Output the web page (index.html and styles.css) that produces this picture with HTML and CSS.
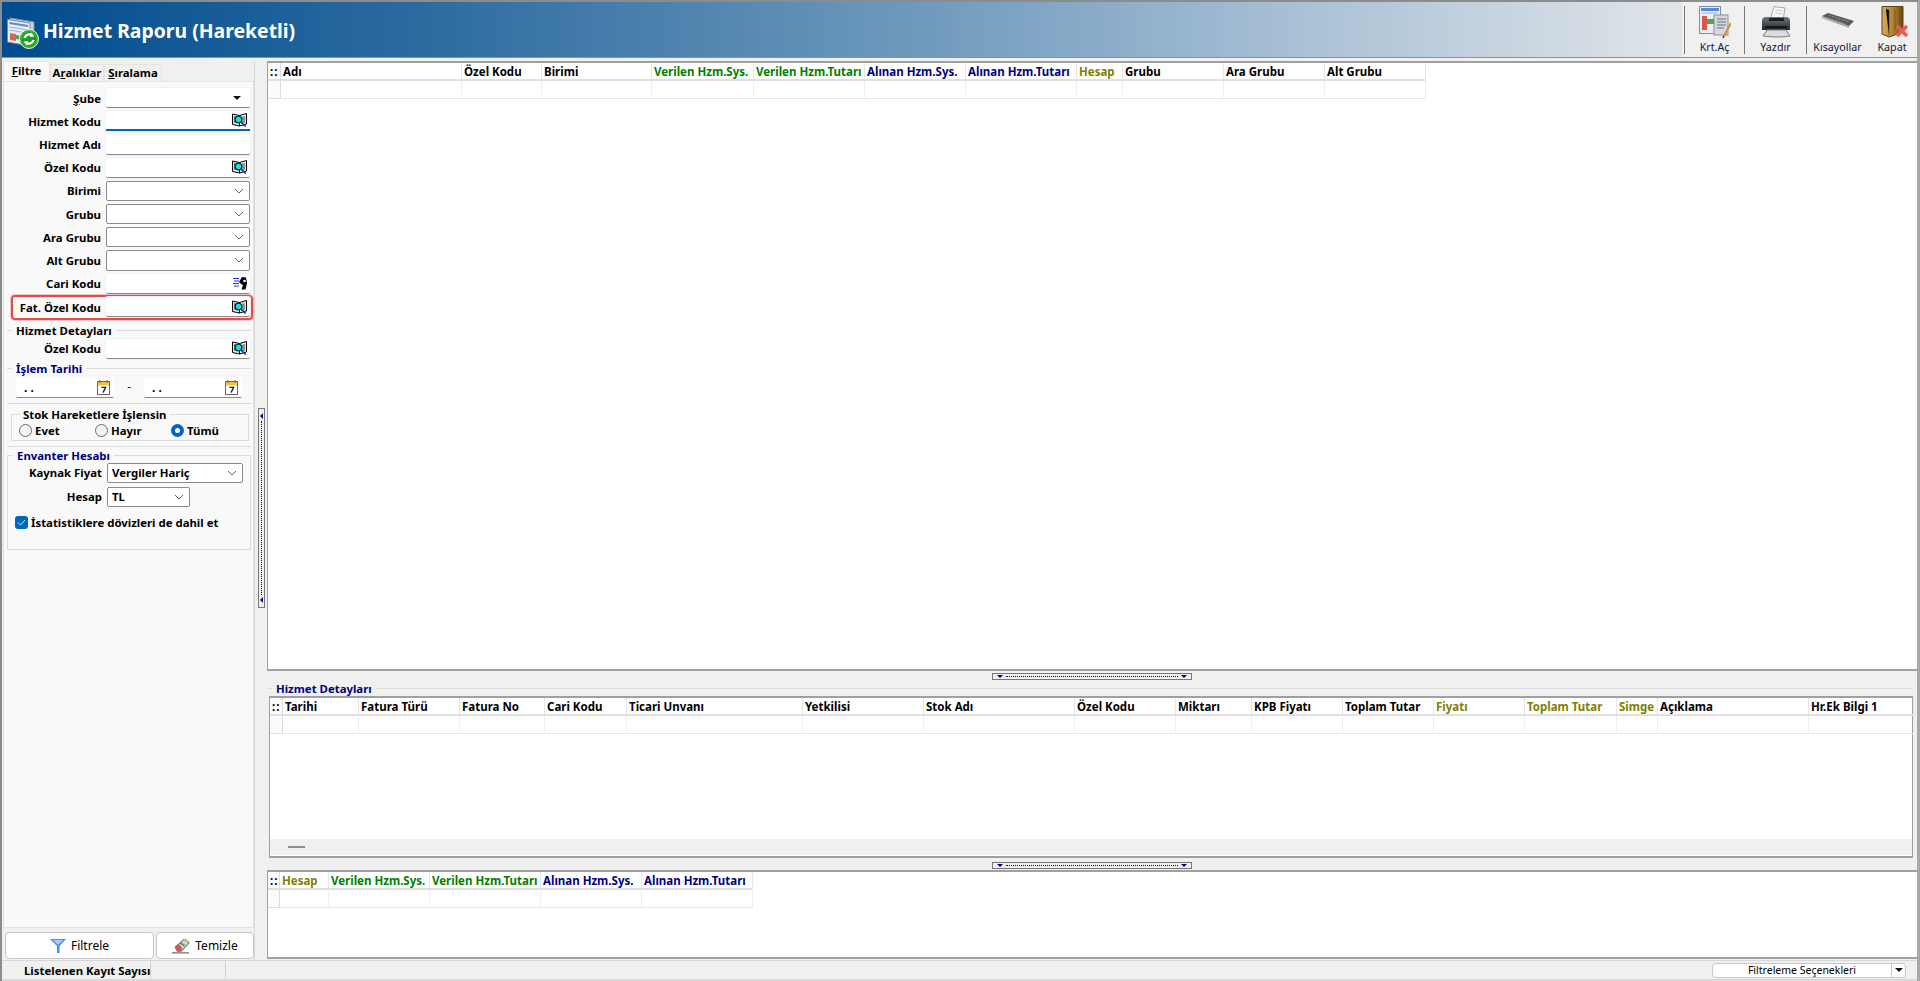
FILE: index.html
```html
<!DOCTYPE html>
<html lang="tr">
  <head>
    <meta charset="UTF-8" />
    <meta name="viewport" content="width=device-width, initial-scale=1.0" />
    <title>Hizmet Raporu (Hareketli)</title>
    <link rel="stylesheet" href="styles.css">
  </head>
  <body>
    <svg class="icon-defs" width="0" height="0">
      <defs>
        <linearGradient id="door-fill" x1="0" y1="0" x2="1" y2="0">
          <stop offset="0" stop-color="#d8b060" />
          <stop offset="0.6" stop-color="#a87a2c" />
          <stop offset="1" stop-color="#6e4c18" />
        </linearGradient>
        <linearGradient id="printer-fill" x1="0" y1="0" x2="0" y2="1">
          <stop offset="0" stop-color="#70767c" />
          <stop offset="1" stop-color="#24282c" />
        </linearGradient>
      </defs>
      <symbol id="book" viewBox="0 0 15 14">
        <path d="M0.5 1 L7.5 2.5 L14.5 0.5 V11 L7.5 13 L0.5 11.5 Z" fill="#e4e4e4" stroke="#000" />
        <path d="M7.5 2.5 V13" stroke="#000" />
        <path d="M2 3 L6 4 V10.5 L2 9.5 Z" fill="#5c6a5c" />
        <path d="M9 4 L13 3 V9.5 L9 10.5 Z" fill="#8c948c" />
        <circle cx="6.5" cy="6.5" r="3.4" fill="#12e0e8" stroke="#000" />
        <path d="M9 9 L13.8 13.5" stroke="#1030c0" stroke-width="1.7" />
      </symbol>
      <symbol id="calendar" viewBox="0 0 13 15">
        <rect x="0.5" y="1.5" width="12" height="13" fill="#fff" stroke="#666" />
        <rect x="1" y="2" width="11" height="3.5" fill="#f2c63c" />
        <path d="M3 0 V3 M10 0 V3" stroke="#a07820" stroke-width="1.4" />
        <path d="M4.4 7.4 H8.6 L6 12.6" fill="none" stroke="#222" stroke-width="1.3" />
      </symbol>
      <symbol id="chevron" viewBox="0 0 10 6">
        <path d="M1 1 L5 5 L9 1" fill="none" stroke="#666" />
      </symbol>
    </svg>

    <div class="window">
      <header class="titlebar">
        <svg class="title-icon" viewBox="0 0 32 32">
          <path d="M3 1 L27 5 V27 L3 23 Z" fill="#c8d0dc" stroke="#8090a4" />
          <path d="M0.5 2.5 L23 6 V29 L0.5 25 Z" fill="#e8edf6" stroke="#7a8aa0" />
          <path d="M2.5 6 L21 9" stroke="#5d88d8" stroke-width="2" />
          <path d="M2.5 10 L21 13 M2.5 13 L14 15" stroke="#9ab0d8" />
          <path d="M3 16 L9 17 V24 L3 23 Z" fill="#d06a58" />
          <path d="M9 18 L20 20 V24 L9 22 Z" fill="#4fa64f" />
          <circle cx="22" cy="22" r="9.5" fill="#2fb02f" stroke="#e8f4e8" />
          <circle cx="22" cy="22" r="7" fill="#1f9a2a" />
          <path d="M17.5 21 A5 5 0 0 1 25.5 18.5 M26.5 23 A5 5 0 0 1 18.5 25.5" fill="none" stroke="#fff" stroke-width="2.4" />
          <path d="M24 15.5 L27.5 19.5 L23 20 Z M20 28.5 L16.5 24.5 L21 24 Z" fill="#fff" />
        </svg>
        <h1 class="title-text">Hizmet Raporu (Hareketli)</h1>
        <nav class="toolbar">
          <button class="tool tool-sep tool-krt">
            <svg viewBox="0 0 32 32">
              <rect x="0.5" y="0.5" width="21" height="27" fill="#e9eef8" stroke="#7e8fa8" />
              <rect x="2" y="2" width="18" height="3" fill="#5d88d8" />
              <path d="M3 7 H19" stroke="#9ab0d8" />
              <rect x="3" y="10" width="5" height="14" fill="#d9574a" />
              <rect x="8" y="13" width="10" height="5" fill="#4da65a" />
              <rect x="15" y="9" width="14" height="20" fill="#d5d8dc" stroke="#8a8f96" />
              <path d="M18 13 H27 M18 16 H27 M18 19 H27 M18 22 H25" stroke="#8f9399" stroke-width="1.4" />
              <path d="M32 17 L25 30" stroke="#c89a30" stroke-width="2.2" />
              <path d="M25 30 L24 32" stroke="#333" stroke-width="1.5" />
            </svg>
            <span>Krt.Aç</span>
          </button>
          <button class="tool tool-sep tool-print">
            <svg viewBox="0 0 32 32">
              <path d="M14 0.5 L25 2 L23 14 H10 Z" fill="#f6f6f6" stroke="#a8a8a8" />
              <path d="M16 4 L23 5 M15.5 7 L22 8" stroke="#c8c8c8" />
              <path d="M2 15 Q2 11 6 11 H26 Q30 11 30 15 V24 H2 Z" fill="url(#printer-fill)" />
              <path d="M9 12 H24 V15 H9 Z" fill="#1c2024" />
              <path d="M7 24 H26 L30 30 Q20 32 3 30 Z" fill="#dcdcdc" stroke="#7c7c7c" />
              <rect x="5" y="20" width="22" height="2.4" fill="#14181c" />
            </svg>
            <span>Yazdır</span>
          </button>
          <button class="tool tool-sep tool-keys">
            <svg viewBox="0 0 32 32">
              <path d="M0 10 L6 7 L32 15 L27 20 Z" fill="#55585c" />
              <path d="M0 10 L27 20 L27 22 L0 12 Z" fill="#a4a7aa" />
              <path d="M7 9.5 L27 15.5 M6 12 L24 18" stroke="#8d8f92" stroke-dasharray="2 1" />
              <path d="M14 13 L18 14.4" stroke="#c05050" />
            </svg>
            <span>Kısayollar</span>
          </button>
          <button class="tool tool-close">
            <svg viewBox="0 0 32 32">
              <path d="M6 0.5 H27 V26 L13 31 L6 28 Z" fill="url(#door-fill)" stroke="#5e3f12" />
              <path d="M10 3 L13 4 V29 M19 3 V24 M24 3 V23" stroke="#5e3f12" stroke-opacity="0.55" />
              <path d="M21 20 L31 30 M31 20 L21 30" stroke="#f05858" stroke-width="3.6" />
            </svg>
            <span>Kapat</span>
          </button>
        </nav>
      </header>

      <div class="content">
        <aside class="sidebar">
          <div class="tabs">
            <div class="tab active"><u>F</u>iltre</div>
            <div class="tab tab-ranges">A<u>r</u>alıklar</div>
            <div class="tab tab-sort"><u>S</u>ıralama</div>
          </div>

          <div class="panel">
            <div class="form-rows">
              <div class="row">
                <label><u>Ş</u>ube</label>
                <div class="input"><span class="caret-black"></span></div>
              </div>
              <div class="row">
                <label>Hizmet Kodu</label>
                <div class="input focused"><svg class="ic-book"><use href="#book" /></svg></div>
              </div>
              <div class="row">
                <label>Hizmet Adı</label>
                <div class="input"></div>
              </div>
              <div class="row">
                <label>Özel Kodu</label>
                <div class="input"><svg class="ic-book"><use href="#book" /></svg></div>
              </div>
              <div class="row">
                <label>Birimi</label>
                <div class="input combo"><svg class="ic-chev"><use href="#chevron" /></svg></div>
              </div>
              <div class="row">
                <label>Grubu</label>
                <div class="input combo"><svg class="ic-chev"><use href="#chevron" /></svg></div>
              </div>
              <div class="row">
                <label>Ara Grubu</label>
                <div class="input combo"><svg class="ic-chev"><use href="#chevron" /></svg></div>
              </div>
              <div class="row">
                <label>Alt Grubu</label>
                <div class="input combo"><svg class="ic-chev"><use href="#chevron" /></svg></div>
              </div>
              <div class="row">
                <label>Cari Kodu</label>
                <div class="input">
                  <svg class="ic-runner" viewBox="0 0 14 14">
                    <path d="M0 2.5 H6 M1 5 H6 M0 7.5 H6 M1 10 H6" stroke="#2030e0" />
                    <path d="M6 6 L9 1 L13 1.5 L14 7 L12.5 13.5 H8.5 L10 9 L8 8 Z" fill="#000" />
                    <circle cx="11.5" cy="5" r="1.3" fill="#fff" />
                  </svg>
                </div>
              </div>
              <div class="row row-marked">
                <label>Fat. Özel Kodu</label>
                <div class="input"><svg class="ic-book"><use href="#book" /></svg></div>
              </div>
            </div>

            <fieldset class="group group-details">
              <legend>Hizmet Detayları</legend>
              <div class="row">
                <label>Özel Kodu</label>
                <div class="input"><svg class="ic-book"><use href="#book" /></svg></div>
              </div>
            </fieldset>

            <fieldset class="group group-date">
              <legend class="blue">İşlem Tarihi</legend>
              <div class="date-row">
                <div class="date-input"><span>. .</span><svg class="ic-cal"><use href="#calendar" /></svg></div>
                <span class="date-dash">-</span>
                <div class="date-input"><span>. .</span><svg class="ic-cal"><use href="#calendar" /></svg></div>
              </div>
              <div class="stock-wrap">
                <fieldset class="group-stock">
                  <legend>Stok Hareketlere İşlensin</legend>
                  <div class="radio-item"><span class="radio"></span>Evet</div>
                  <div class="radio-item"><span class="radio"></span>Hayır</div>
                  <div class="radio-item"><span class="radio checked"></span>Tümü</div>
                </fieldset>
              </div>
            </fieldset>

            <fieldset class="group group-stock-calc">
              <legend class="blue">Envanter Hesabı</legend>
              <div class="calc-row">
                <label>Kaynak Fiyat</label>
                <div class="input combo select-wide">Vergiler Hariç<svg class="ic-chev"><use href="#chevron" /></svg></div>
              </div>
              <div class="calc-row">
                <label>Hesap</label>
                <div class="input combo select-short">TL<svg class="ic-chev"><use href="#chevron" /></svg></div>
              </div>
              <div class="check-row">
                <span class="checkbox">
                  <svg viewBox="0 0 13 13"><path d="M3 6.5 L5.5 9 L10 4" fill="none" stroke="#cfe4f8" /></svg>
                </span>
                İstatistiklere dövizleri de dahil et
              </div>
            </fieldset>
          </div>

          <div class="side-buttons">
            <button class="btn btn-filter">
              <svg viewBox="0 0 16 14"><path d="M0 0 H16 L9.5 7 V14 H7 V7 Z" fill="#4d8ff0" /><path d="M3 1 H13 L8 6 Z" fill="#a6ccff" /></svg>
              Filtrele
            </button>
            <button class="btn btn-clear">
              <svg class="ic-eraser" viewBox="0 0 17 14">
                <path d="M3 8 L11 1 L16 4 L9 12 H5 Z" fill="#d8d8d8" stroke="#777" />
                <path d="M3 8 L6 5 L10 9 L8 12 H5 Z" fill="#d05858" />
                <path d="M11 1 L13 0 L16 2 L15 4 Z" fill="#e6c33a" />
                <path d="M8 4 L12 7" stroke="#58a058" stroke-width="2" />
                <path d="M0 13.5 H16" stroke="#555" />
              </svg>
              Temizle
            </button>
          </div>
        </aside>

        <div class="gutter">
          <div class="grip-v"><i></i><b></b><i></i></div>
        </div>

        <main class="main">
          <section class="grid-box grid-box-top">
            <div class="grid grid-main">
              <div class="hd ind">::</div>
              <div class="hd">Adı</div>
              <div class="hd">Özel Kodu</div>
              <div class="hd">Birimi</div>
              <div class="hd green">Verilen Hzm.Sys.</div>
              <div class="hd green">Verilen Hzm.Tutarı</div>
              <div class="hd navy">Alınan Hzm.Sys.</div>
              <div class="hd navy">Alınan Hzm.Tutarı</div>
              <div class="hd olive">Hesap</div>
              <div class="hd">Grubu</div>
              <div class="hd">Ara Grubu</div>
              <div class="hd">Alt Grubu</div>
              <div class="cl ind"></div><div class="cl"></div><div class="cl"></div><div class="cl"></div>
              <div class="cl"></div><div class="cl"></div><div class="cl"></div><div class="cl"></div>
              <div class="cl"></div><div class="cl"></div><div class="cl"></div><div class="cl"></div>
            </div>
          </section>

          <div class="split split-top"><div class="grip-h"><i></i><b></b><i></i></div></div>

          <div class="detail-title"><span>Hizmet Detayları</span></div>
          <section class="grid-box grid-box-detail">
            <div class="grid grid-detail">
              <div class="hd ind">::</div>
              <div class="hd">Tarihi</div>
              <div class="hd">Fatura Türü</div>
              <div class="hd">Fatura No</div>
              <div class="hd">Cari Kodu</div>
              <div class="hd">Ticari Unvanı</div>
              <div class="hd">Yetkilisi</div>
              <div class="hd">Stok Adı</div>
              <div class="hd">Özel Kodu</div>
              <div class="hd">Miktarı</div>
              <div class="hd">KPB Fiyatı</div>
              <div class="hd">Toplam Tutar</div>
              <div class="hd olive">Fiyatı</div>
              <div class="hd olive">Toplam Tutar</div>
              <div class="hd olive">Simge</div>
              <div class="hd">Açıklama</div>
              <div class="hd">Hr.Ek Bilgi 1</div>
              <div class="cl ind"></div><div class="cl"></div><div class="cl"></div><div class="cl"></div>
              <div class="cl"></div><div class="cl"></div><div class="cl"></div><div class="cl"></div>
              <div class="cl"></div><div class="cl"></div><div class="cl"></div><div class="cl"></div>
              <div class="cl"></div><div class="cl"></div><div class="cl"></div><div class="cl"></div><div class="cl"></div>
            </div>
            <div class="grid-footer"><span class="footer-dash"></span></div>
          </section>

          <div class="split split-bottom"><div class="grip-h"><i></i><b></b><i></i></div></div>

          <section class="grid-box grid-box-total">
            <div class="grid grid-total">
              <div class="hd ind">::</div>
              <div class="hd olive">Hesap</div>
              <div class="hd green">Verilen Hzm.Sys.</div>
              <div class="hd green">Verilen Hzm.Tutarı</div>
              <div class="hd navy">Alınan Hzm.Sys.</div>
              <div class="hd navy">Alınan Hzm.Tutarı</div>
              <div class="cl ind"></div><div class="cl"></div><div class="cl"></div>
              <div class="cl"></div><div class="cl"></div><div class="cl"></div>
            </div>
          </section>
        </main>
      </div>

      <footer class="statusbar">
        <div class="status-label">Listelenen Kayıt Sayısı</div>
        <div class="status-cell"></div>
        <div class="filter-options">
          <span>Filtreleme Seçenekleri</span>
          <span class="filter-arrow"><span class="caret-black"></span></span>
        </div>
      </footer>
    </div>
  </body>
</html>
```

FILE: styles.css
```css
* {
  box-sizing: border-box;
}

html,
body {
  margin: 0;
  height: 100%;
  overflow: hidden;
}

body {
  font-family: "Noto Sans", sans-serif;
  font-size: 11.4px;
  color: #000;
  background: #f0f0f0;
}

.icon-defs {
  position: absolute;
}

.window {
  height: 981px;
  display: flex;
  flex-direction: column;
  border-top: 2px solid #8c8c8c;
  border-left: 2px solid #8c8c8c;
  border-right: 3px solid #a8a8a8;
  background: #f0f0f0;
}

/* title bar */
.titlebar {
  height: 56px;
  flex: none;
  display: flex;
  align-items: center;
  padding-left: 5px;
  background: linear-gradient(90deg, #004c8e 0%, #2c6ba0 22%, #6f9abd 48%, #a4bdd4 66%, #dfe4e8 87%, #e8ebee 100%);
  border-bottom: 1px solid #909090;
}

.title-icon {
  width: 32px;
  height: 32px;
  margin-top: 6px;
  flex: none;
}

.title-text {
  margin: 2px 0 0 4px;
  font-size: 19.4px;
  font-weight: 700;
  color: #fff;
  white-space: nowrap;
}

.toolbar {
  margin-left: auto;
  height: 100%;
  width: 235px;
  display: flex;
  align-items: center;
  background: #f0f0f0;
  padding-left: 2px;
}

.tool {
  height: 48px;
  border: 0;
  background: none;
  padding: 0;
  font: inherit;
  font-size: 10.7px;
  color: #10183a;
  display: flex;
  flex-direction: column;
  align-items: center;
  justify-content: space-between;
  flex: none;
}

.tool svg {
  width: 32px;
  height: 32px;
}

.tool-sep {
  border-left: 1px solid #777;
}

.tool-krt {
  width: 60px;
}

.tool-print {
  width: 62px;
}

.tool-keys {
  width: 62px;
}

.tool-close {
  width: 48px;
}

/* main area */
.content {
  flex: 1;
  min-height: 0;
  display: flex;
  padding-top: 3px;
}

.sidebar {
  width: 252px;
  flex: none;
  padding-left: 1px;
  display: flex;
  flex-direction: column;
}

.tabs {
  display: flex;
  align-items: flex-end;
  height: 20px;
  font-weight: 700;
}

.tab {
  height: 17px;
  background: #f0f0f0;
  border: 1px solid #e4e4e4;
  border-bottom: 0;
  line-height: 16px;
  text-align: center;
}

.tab-ranges {
  width: 54px;
}

.tab-sort {
  width: 58px;
}

.tab.active {
  height: 20px;
  width: 47px;
  background: #f9f9f9;
  line-height: 18px;
}

.panel {
  flex: 1;
  background: #f9f9f9;
  border: 1px solid #e2e2e2;
  padding: 6px 2px 0 3px;
  font-weight: 700;
  min-height: 0;
}

.form-rows {
  display: flex;
  flex-direction: column;
  gap: 3px;
}

.row {
  display: flex;
  align-items: center;
  height: 20.2px;
  flex: none;
}

.row label {
  width: 94px;
  text-align: right;
  margin-right: 5px;
  white-space: nowrap;
}

.input {
  width: 144px;
  height: 100%;
  background: #fff;
  border-bottom: 1px solid #8a8a8a;
  border-radius: 2px;
  display: flex;
  align-items: center;
  justify-content: flex-end;
  padding-right: 3px;
  flex: none;
  box-shadow: 0 0 0 1px #f0f0f0;
}

.input.focused {
  border-bottom: 2px solid #0067c0;
  border-radius: 0;
}

.input.combo {
  border: 1px solid #8a8a8a;
  padding-right: 5px;
  box-shadow: none;
}

.row-marked {
  margin: -2px -2px 0 4px;
  height: 25px;
  padding-right: 1px;
  border: 2px solid #e84a4a;
  border-radius: 4px;
  box-shadow: 0 0 0 1px rgba(230, 120, 120, 0.4);
}

.row-marked label {
  width: 88px;
}

.row-marked .input {
  height: 20px;
}

.ic-book {
  width: 15px;
  height: 14px;
}

.ic-chev {
  width: 10px;
  height: 6px;
  flex: none;
}

.ic-runner {
  width: 14px;
  height: 14px;
}

.ic-cal {
  width: 13px;
  height: 15px;
  flex: none;
}

.caret-black {
  width: 0;
  height: 0;
  border-left: 4px solid transparent;
  border-right: 4px solid transparent;
  border-top: 4px solid #111;
  margin-right: 6px;
  display: block;
}

/* field groups */
fieldset {
  margin: 0;
  min-width: 0;
}

.group {
  padding: 0;
  border: 0;
  border-top: 1px solid #dcdcdc;
}

legend {
  padding: 0 4px;
  margin-left: 5px;
  line-height: 13px;
  white-space: nowrap;
}

.blue {
  color: #000080;
}

.group-details {
  margin-top: 4px;
  padding-top: 2px;
  height: 38px;
}

.group-date {
  height: 85px;
  border-bottom: 1px solid #dcdcdc;
}

.date-row {
  display: flex;
  align-items: flex-start;
  padding: 3px 0 0 9px;
  border-bottom: 1px solid #dcdcdc;
  height: 29px;
}

.date-input {
  width: 98px;
  height: 20px;
  background: #fff;
  border-bottom: 1px solid #8a8a8a;
  border-radius: 2px;
  display: flex;
  align-items: center;
  justify-content: space-between;
  padding: 0 4px 0 8px;
  font-size: 12px;
}

.date-dash {
  width: 30px;
  text-align: center;
  font-weight: 400;
}

.stock-wrap {
  padding: 4px 2px 0 4px;
}

.group-stock {
  border: 1px solid #dcdcdc;
  height: 33px;
  padding: 0 0 0 7px;
  display: flex;
}

.group-stock legend {
  margin-left: 1px;
  padding: 0 4px 0 3px;
}

.radio-item {
  width: 76px;
  display: flex;
  align-items: center;
  gap: 3px;
}

.radio {
  width: 13px;
  height: 13px;
  border-radius: 50%;
  background: #f4f4f4;
  border: 1px solid #6a6a6a;
  flex: none;
}

.radio.checked {
  background: #fff;
  border: 4px solid #0067c0;
}

.group-stock-calc {
  border: 1px solid #dcdcdc;
  margin-top: 2px;
  height: 101px;
  padding: 1px 0 0;
}

.calc-row {
  display: flex;
  align-items: center;
  height: 20px;
  margin-bottom: 4px;
}

.calc-row label {
  width: 94px;
  text-align: right;
  margin-right: 5px;
  white-space: nowrap;
}

.select-wide,
.select-short {
  justify-content: space-between;
  padding-left: 4px;
  border-radius: 2px;
}

.select-wide {
  width: 136px;
}

.select-short {
  width: 83px;
}

.check-row {
  display: flex;
  align-items: center;
  gap: 3px;
  padding-left: 7px;
  margin-top: 8px;
}

.checkbox {
  width: 13px;
  height: 13px;
  background: #0067c0;
  border-radius: 3px;
  flex: none;
  display: block;
}

.checkbox svg {
  display: block;
}

.side-buttons {
  height: 32px;
  flex: none;
  display: flex;
  gap: 2px;
  padding: 4px 0 1px 2px;
}

.btn {
  background: #fff;
  border: 1px solid #c8c8c8;
  border-radius: 4px;
  font: inherit;
  font-size: 12px;
  color: #000;
  display: flex;
  align-items: center;
  justify-content: center;
  gap: 5px;
  padding: 0;
}

.btn-filter {
  width: 149px;
}

.btn-clear {
  width: 98px;
}

.btn svg {
  height: 14px;
  width: 16px;
}

.btn svg.ic-eraser {
  width: 18px;
  height: 16px;
}

.gutter {
  width: 13px;
  flex: none;
  padding: 347px 0 0 3px;
  border-left: 1px solid #d8d8d8;
}

.grip-v {
  width: 7px;
  height: 200px;
  background: #f0f0f0;
  border: 1px solid #777;
  display: flex;
  flex-direction: column;
  align-items: center;
  justify-content: space-between;
  padding: 4px 0;
}

.grip-v i {
  border-top: 3px solid transparent;
  border-bottom: 3px solid transparent;
  border-right: 3px solid #000080;
}

.grip-v b {
  flex: 1;
  border-left: 1px dotted #000080;
  margin: 2px 0;
}

.main {
  flex: 1;
  min-width: 0;
  display: flex;
  flex-direction: column;
}

.grid-box {
  background: #fff;
  border: 1px solid #a0a0a0;
  border-top-width: 2px;
  border-bottom-width: 2px;
  border-right: 0;
}

.grid-box-top {
  height: 610px;
  flex: none;
}

.grid-box-detail {
  height: 162px;
  flex: none;
  margin-left: 2px;
  border-right: 1px solid #a0a0a0;
  display: flex;
  flex-direction: column;
  margin-right: 4px;
}

.grid-box-total {
  height: 89px;
  flex: none;
}

.grid {
  display: grid;
  grid-auto-rows: 18px;
}

.grid-main {
  grid-template-columns: 13px 181px 80px 110px 102px 111px 101px 111px 46px 101px 101px 101px;
  grid-template-rows: 18px 18px;
}

.grid-detail {
  grid-template-columns: 13px 76px 101px 85px 82px 176px 121px 151px 101px 76px 91px 91px 91px 92px 41px 151px 105px;
  grid-template-rows: 18px 18px;
}

.grid-total {
  grid-template-columns: 12px 49px 101px 111px 101px 111px;
  grid-template-rows: 18px 18px;
}

.hd {
  font-weight: 700;
  font-size: 11.5px;
  line-height: 17px;
  padding-left: 2px;
  white-space: nowrap;
  overflow: hidden;
  border-right: 1px solid #e6e6e6;
  border-bottom: 2px solid #e0e0e0;
}

.cl {
  border-right: 1px solid #efefef;
  border-bottom: 1px solid #e6e6e6;
}

.ind {
  padding-left: 2px;
  letter-spacing: 1px;
  border-right: 1px solid #dcdcdc;
  border-bottom-color: #e0e0e0;
  background: #fbfbfb;
}

.green {
  color: #008000;
}

.navy {
  color: #000080;
}

.olive {
  color: #808000;
}

.grid-footer {
  margin-top: auto;
  height: 16px;
  margin-bottom: 1px;
  background: #f0f0f0;
  display: flex;
  align-items: center;
  padding-left: 18px;
}

.footer-dash {
  width: 17px;
  height: 2px;
  background: #8c8c8c;
}

.split {
  display: flex;
  justify-content: center;
  flex: none;
}

.split-top {
  height: 9px;
  padding-top: 2px;
  padding-right: 1px;
}

.split-bottom {
  height: 12px;
  padding-top: 4px;
  padding-right: 1px;
}

.grip-h {
  width: 200px;
  height: 7px;
  background: #f0f0f0;
  border: 1px solid #777;
  display: flex;
  align-items: center;
  padding: 0 4px;
}

.grip-h i {
  border-left: 3px solid transparent;
  border-right: 3px solid transparent;
  border-top: 3px solid #000080;
}

.grip-h b {
  flex: 1;
  border-top: 1px dotted #000080;
  margin: 0 3px;
}

.detail-title {
  height: 16px;
  flex: none;
  margin-left: 1px;
  font-weight: 700;
  color: #000080;
  display: flex;
  align-items: center;
  padding-left: 4px;
  background: linear-gradient(#dcdcdc, #dcdcdc) 0 50% / 100% 1px no-repeat;
  margin-right: 4px;
}

.detail-title span {
  background: #f0f0f0;
  padding: 0 4px;
}

/* status bar */
.statusbar {
  height: 21px;
  flex: none;
  display: flex;
  align-items: center;
  border-top: 1px solid #d8d8d8;
  border-bottom: 2px solid #d8d8d8;
}

.status-label {
  width: 149px;
  padding-left: 22px;
  font-weight: 700;
  white-space: nowrap;
  border-right: 1px solid #d0d0d0;
  height: 100%;
  line-height: 19px;
}

.status-cell {
  width: 75px;
  height: 100%;
  border-right: 1px solid #d0d0d0;
}

.filter-options {
  width: 194px;
  height: 15px;
  margin-left: auto;
  margin-right: 11px;
  padding-right: 14px;
  background: #fff;
  border: 1px solid #c8c8c8;
  border-radius: 4px;
  display: flex;
  align-items: center;
  justify-content: center;
  position: relative;
  font-size: 10.5px;
  line-height: 13px;
}

.filter-arrow {
  position: absolute;
  right: 0;
  top: 0;
  bottom: 0;
  width: 14px;
  border-left: 1px solid #c8c8c8;
  display: flex;
  align-items: center;
  justify-content: center;
}

.filter-arrow .caret-black {
  margin: 0;
}
```
